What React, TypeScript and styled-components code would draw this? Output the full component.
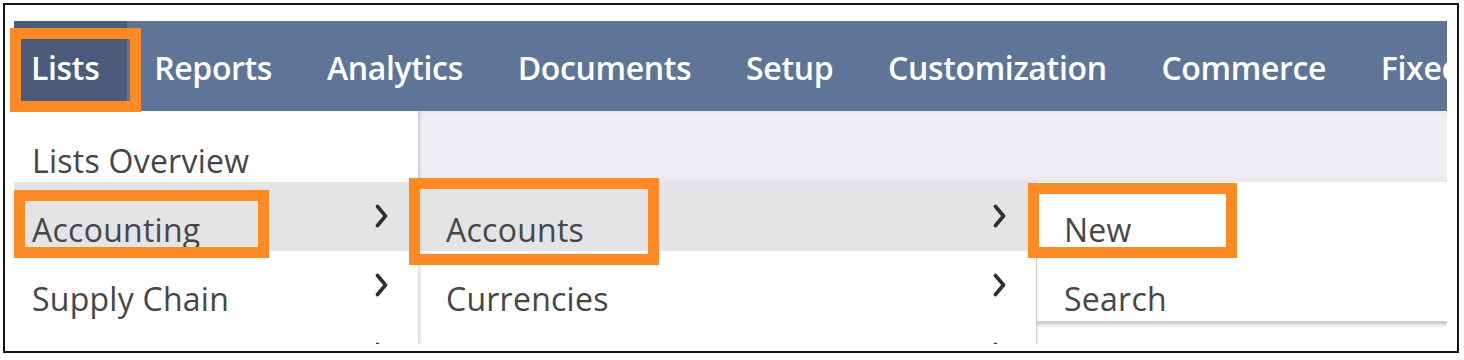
import React from "react";
import styled, { createGlobalStyle } from "styled-components";

const Global = createGlobalStyle`
  html, body { margin: 0; padding: 0; background: #ffffff; }
  body { font-family: "Open Sans", "Liberation Sans", sans-serif; }
  * { box-sizing: border-box; }
`;

const Frame = styled.div`
  margin: 3px;
  width: 1456px;
  height: 350px;
  border: 2px solid #141414;
  background: #ffffff;
  padding: 16px 10px 7px 9px;
  display: flex;
  flex-direction: column;
`;

const NavWrap = styled.div`
  position: relative;
  z-index: 2;
`;

const NavBar = styled.nav`
  height: 90px;
  background: #5f7598;
  display: flex;
  align-items: stretch;
  overflow: hidden;
  white-space: nowrap;
`;

const NavItem = styled.div<{ $active?: boolean; $first?: boolean }>`
  flex: none;
  display: flex;
  align-items: center;
  padding: 3px 27.4px 0 ${(p) => (p.$first ? "17px" : "27.4px")};
  background: ${(p) => (p.$active ? "#4a5b7b" : "transparent")};
  color: #ffffff;
  font-size: 32px;
  font-weight: 600;
  line-height: 40px;
  letter-spacing: -0.35px;
`;

const Callout = styled.div<{ $l: number; $t: number; $w: number; $h: number }>`
  position: absolute;
  left: ${(p) => p.$l}px;
  top: ${(p) => p.$t}px;
  width: ${(p) => p.$w}px;
  height: ${(p) => p.$h}px;
  border: 11px solid #fd8a22;
  pointer-events: none;
  z-index: 3;
`;

const MenuArea = styled.div`
  height: 233px;
  display: flex;
  overflow: hidden;
`;

const Panel = styled.div<{ $w?: number }>`
  flex: ${(p) => (p.$w ? "none" : "1")};
  width: ${(p) => (p.$w ? `${p.$w}px` : "auto")};
  background: #ffffff;
  display: flex;
  flex-direction: column;
`;

const Level1 = styled(Panel)`
  box-shadow: 2px 0 3px rgba(0, 0, 0, 0.16);
  position: relative;
  z-index: 1;
`;

const Level2 = styled(Panel)`
  border-right: 1px solid #d4d4d8;
  box-shadow: 1px 0 2px rgba(0, 0, 0, 0.08);
`;

const Level3 = styled(Panel)`
  align-self: flex-start;
  height: 142px;
  border-bottom: 3px solid #cfcfd3;
  box-shadow: 0 2px 3px rgba(0, 0, 0, 0.12);
`;

const RightArea = styled.div`
  flex: 1;
  display: flex;
  flex-direction: column;
  min-width: 0;
`;

const PageStrip = styled.div`
  flex: none;
  height: 71px;
  background: linear-gradient(180deg, #e9e9ee 0px, #efeff4 6px, #efeff4 62px, #e8e8ec 71px);
`;

const SubMenus = styled.div`
  flex: 1;
  display: flex;
  background: #ffffff;
`;

const Row = styled.div<{ $h?: number; $hl?: boolean; $pl: number }>`
  position: relative;
  flex: none;
  height: ${(p) => p.$h ?? 69}px;
  display: flex;
  align-items: flex-end;
  justify-content: space-between;
  padding: 0 30px 1px ${(p) => p.$pl}px;
  background: ${(p) => (p.$hl ? "#e4e4e7" : "transparent")};
  color: #464646;
  font-size: 32px;
  font-weight: 400;
  line-height: 40px;
  letter-spacing: 0.25px;
  white-space: nowrap;
`;

const Chevron = styled.svg`
  flex: none;
  align-self: center;
  width: 13px;
  height: 24px;
  margin-left: auto;
`;

function Arrow() {
  return (
    <Chevron viewBox="0 0 13 24">
      <polyline
        points="2.5,2.5 10.5,12 2.5,21.5"
        fill="none"
        stroke="#2f2f2f"
        strokeWidth="3.6"
        strokeLinecap="round"
        strokeLinejoin="round"
      />
    </Chevron>
  );
}

const navItems = [
  "Reports",
  "Analytics",
  "Documents",
  "Setup",
  "Customization",
  "Commerce",
  "Fixed Assets",
];

export default function App() {
  return (
    <>
      <Global />
      <Frame>
        <NavWrap>
          <NavBar>
            <NavItem $active $first>Lists</NavItem>
            {navItems.map((n) => (
              <NavItem key={n}>{n}</NavItem>
            ))}
          </NavBar>
          <Callout $l={-4} $t={7} $w={131} $h={84} />
        </NavWrap>
        <MenuArea>
          <Level1 $w={404}>
            <Row $h={71} $pl={18}>
              <span>Lists Overview</span>
            </Row>
            <Row $hl $pl={18}>
              <span>Accounting</span>
              <Arrow />
              <Callout $l={0} $t={8} $w={255} $h={68} />
            </Row>
            <Row $pl={18}>
              <span>Supply Chain</span>
              <Arrow />
            </Row>
            <Row $pl={18}>
              <Arrow />
            </Row>
          </Level1>
          <RightArea>
            <PageStrip />
            <SubMenus>
              <Level2 $w={619}>
                <Row $hl $pl={28}>
                  <span>Accounts</span>
                  <Arrow />
                  <Callout $l={-9} $t={-4} $w={250} $h={87} />
                </Row>
                <Row $pl={28}>
                  <span>Currencies</span>
                  <Arrow />
                </Row>
                <Row $pl={28}>
                  <Arrow />
                </Row>
              </Level2>
              <Level3>
                <Row $pl={27}>
                  <span>New</span>
                  <Callout $l={-9} $t={1} $w={209} $h={75} />
                </Row>
                <Row $pl={27}>
                  <span>Search</span>
                </Row>
              </Level3>
            </SubMenus>
          </RightArea>
        </MenuArea>
      </Frame>
    </>
  );
}
